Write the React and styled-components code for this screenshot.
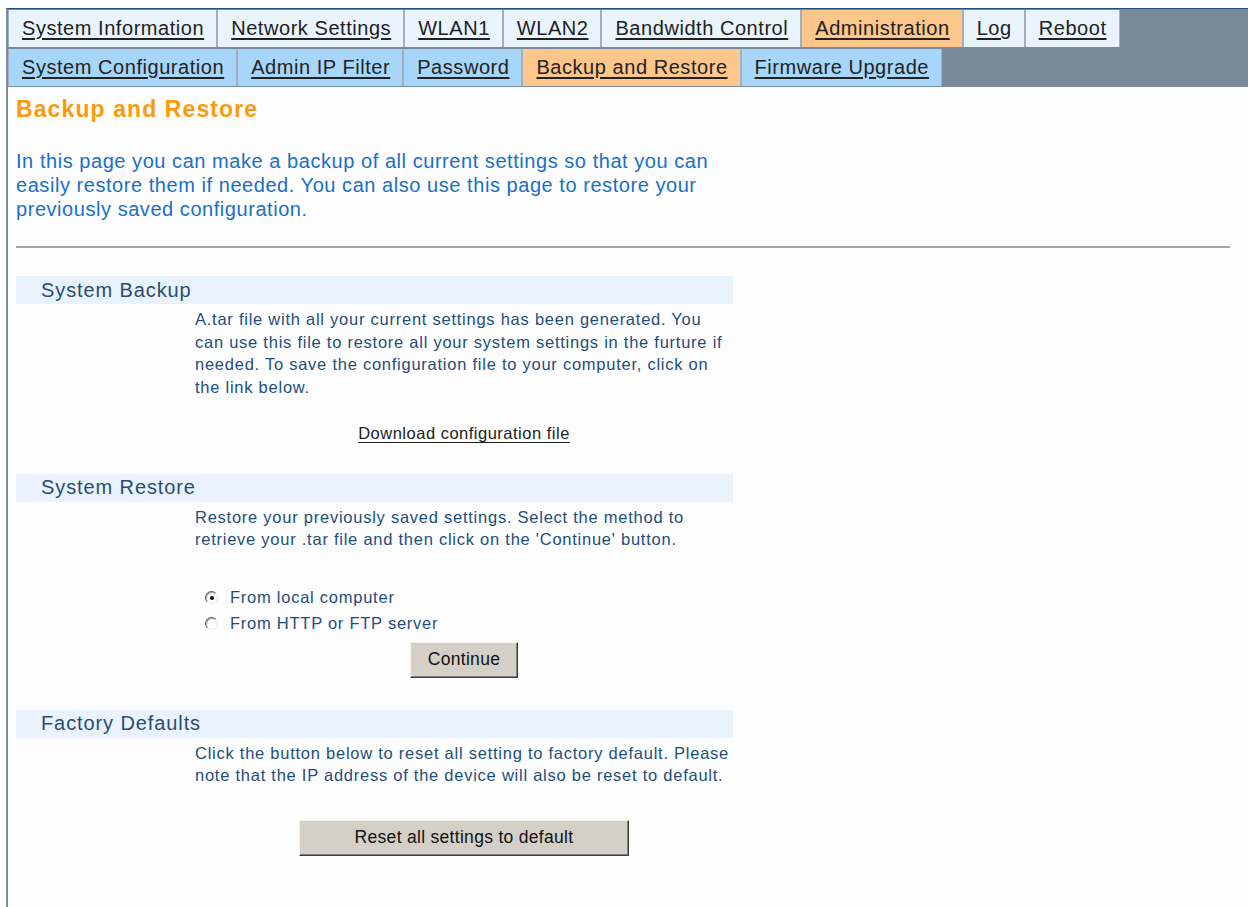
import React from 'react'
import styled, { createGlobalStyle } from 'styled-components'

const Global = createGlobalStyle`
  html, body {
    margin: 0;
    padding: 0;
    background: #ffffff;
  }
  body {
    font-family: "Liberation Sans", Arial, sans-serif;
  }
`

const Frame = styled.div`
  margin: 8px 0 0 6px;
  border-left: 2px solid #7d8b9c;
  border-top: 1px solid #1f4f7f;
  min-height: 899px;
  background: #fdfdfd;
  box-sizing: border-box;
`

const Nav = styled.div`
  background: #7b8a9b;
  display: flex;
  flex-direction: column;
  gap: 2px;
  padding-top: 1px;
  padding-bottom: 1px;
`

const TabRow = styled.div`
  display: flex;
  height: 37px;
`

const Tab = styled.a`
  display: flex;
  align-items: center;
  padding: 0 12px 0 13px;
  border: 1px solid #a3afbd;
  border-top: none;
  border-bottom: none;
  background: ${p => (p.$active ? '#fdc68b' : p.$level === 2 ? '#a8d6fb' : '#eaf4fd')};
  color: #222;
  font-size: 20px;
  letter-spacing: 0.55px;
  text-decoration: underline;
  text-underline-offset: 3px;
  white-space: nowrap;
  cursor: pointer;
`

const Content = styled.div`
  padding: 9px 18px 0 8px;
`

const Title = styled.h1`
  margin: 0;
  color: #fb9b0b;
  font-size: 23px;
  font-weight: bold;
  letter-spacing: 1.1px;
  line-height: 26px;
`

const Intro = styled.p`
  margin: 27px 0 0;
  color: #1870c8;
  font-size: 20px;
  letter-spacing: 0.55px;
  line-height: 24px;
`

const Rule = styled.hr`
  margin: 25px 0 0;
  border: none;
  border-top: 2px solid #a4a4a4;
  height: 0;
`

const Section = styled.section`
  width: 717px;
  margin-top: ${p => p.$top}px;
`

const SectionHead = styled.div`
  height: 28px;
  background: #e8f3fd;
  color: #2b4c6f;
  font-size: 20px;
  letter-spacing: 0.9px;
  padding-left: 25px;
  display: flex;
  align-items: center;
`

const Body = styled.div`
  margin-left: 179px;
  color: #1d4f7a;
  font-size: 16.5px;
  letter-spacing: 0.75px;
  line-height: 22.5px;
  padding-top: 4px;
`

const Center = styled.div`
  display: flex;
  justify-content: center;
  margin-top: ${p => p.$top || 0}px;
`

const DownloadLink = styled.a`
  color: #222;
  font-size: 16.5px;
  letter-spacing: 0.5px;
  text-decoration: underline;
  text-underline-offset: 3px;
  cursor: pointer;
`

const Options = styled.div`
  margin-top: 36px;
  padding-left: 10px;
  display: flex;
  flex-direction: column;
  gap: 4px;
`

const Option = styled.label`
  display: flex;
  align-items: center;
  gap: 12px;
  height: 22px;
`

const Radio = styled.span`
  width: 11px;
  height: 11px;
  border-radius: 50%;
  border: 1px solid;
  border-color: #5e5e5e #e6e6e6 #e6e6e6 #5e5e5e;
  background: #fff;
  box-shadow: inset 1px 1px 0 #a8a8a8;
  display: flex;
  align-items: center;
  justify-content: center;

  &::after {
    content: '';
    width: 4px;
    height: 4px;
    border-radius: 50%;
    background: ${p => (p.$checked ? '#111' : 'transparent')};
  }
`

const Button = styled.button`
  width: ${p => p.$width}px;
  height: 36px;
  background: #d4d0c8;
  border: 1px solid;
  border-color: #f4f3ef #3c3c3c #3c3c3c #f4f3ef;
  box-shadow: inset -1px -1px 0 #808080;
  color: #111;
  font-family: "Liberation Sans", Arial, sans-serif;
  font-size: 17.5px;
  letter-spacing: 0.3px;
  padding: 0;
  cursor: pointer;
`

const topTabs = [
  'System Information',
  'Network Settings',
  'WLAN1',
  'WLAN2',
  'Bandwidth Control',
  'Administration',
  'Log',
  'Reboot',
]

const subTabs = [
  'System Configuration',
  'Admin IP Filter',
  'Password',
  'Backup and Restore',
  'Firmware Upgrade',
]

const App = () => {
  return (
    <>
      <Global />
      <Frame>
        <Nav>
          <TabRow>
            {topTabs.map(t => (
              <Tab key={t} $level={1} $active={t === 'Administration'}>{t}</Tab>
            ))}
          </TabRow>
          <TabRow>
            {subTabs.map(t => (
              <Tab key={t} $level={2} $active={t === 'Backup and Restore'}>{t}</Tab>
            ))}
          </TabRow>
        </Nav>

        <Content>
          <Title>Backup and Restore</Title>
          <Intro>
            In this page you can make a backup of all current settings so that you can<br />
            easily restore them if needed. You can also use this page to restore your<br />
            previously saved configuration.
          </Intro>
          <Rule />

          <Section $top={28}>
            <SectionHead>System Backup</SectionHead>
            <Body>
              A.tar file with all your current settings has been generated. You<br />
              can use this file to restore all your system settings in the furture if<br />
              needed. To save the configuration file to your computer, click on<br />
              the link below.
              <Center $top={24}>
                <DownloadLink>Download configuration file</DownloadLink>
              </Center>
            </Body>
          </Section>

          <Section $top={29}>
            <SectionHead>System Restore</SectionHead>
            <Body>
              Restore your previously saved settings. Select the method to<br />
              retrieve your .tar file and then click on the 'Continue' button.
              <Options>
                <Option><Radio $checked />From local computer</Option>
                <Option><Radio />From HTTP or FTP server</Option>
              </Options>
              <Center $top={7}>
                <Button $width={108}>Continue</Button>
              </Center>
            </Body>
          </Section>

          <Section $top={32}>
            <SectionHead>Factory Defaults</SectionHead>
            <Body>
              Click the button below to reset all setting to factory default. Please<br />
              note that the IP address of the device will also be reset to default.
              <Center $top={33}>
                <Button $width={330}>Reset all settings to default</Button>
              </Center>
            </Body>
          </Section>
        </Content>
      </Frame>
    </>
  )
}

export default App
